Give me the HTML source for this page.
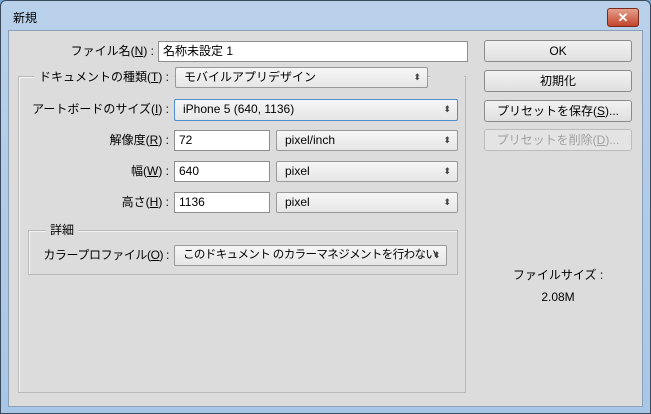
<!DOCTYPE html>
<html><head><meta charset="utf-8"><style>
*{box-sizing:border-box;margin:0;padding:0}
body{width:651px;height:414px;background:#6fa8d6;font-family:"Liberation Sans","Noto Sans CJK JP",sans-serif;font-size:12px;color:#000;position:relative;overflow:hidden}
.frame{position:absolute;left:0;top:0;width:651px;height:414px;background:linear-gradient(#b9d1ea,#a8c6e6);border:1px solid #3a4a5c;border-radius:6px 6px 0 0}
.client{position:absolute;left:8px;top:30px;width:635px;height:377px;background:#dcdcdc;border:1px solid #8aa0b8}
.a{position:absolute}
.lbl{position:absolute;text-align:right;white-space:nowrap;line-height:20px}
.in{position:absolute;background:#fff;border:1px solid #8e8e8e;padding-left:4px;line-height:18px;white-space:nowrap}
.sel{position:absolute;background:linear-gradient(#f6f6f6,#e6e6e6);border:1px solid #999;border-radius:2px;padding-left:8px;line-height:18px;white-space:nowrap}
.sel:after{content:"⬍";position:absolute;right:6px;top:0;font-size:9px;color:#444}
.btn{position:absolute;left:484px;width:148px;height:22px;background:linear-gradient(#f2f2f2,#e0e0e0);border:1px solid #8a8a8a;border-radius:3px;text-align:center;line-height:20px}
.fs{position:absolute;border:1px solid #b9b9b9;box-shadow:1px 1px 0 #f4f4f4 inset}
.leg{position:absolute;background:#dcdcdc;padding:0 4px;line-height:16px}
u{text-decoration:underline}
</style></head><body>
<div class="frame"></div>
<div class="a" style="left:13px;top:9px;font-size:12px">新規</div>
<div class="a" style="left:607px;top:8px;width:32px;height:19px;background:linear-gradient(#e4a08c,#c4442c);border:1px solid #7a2a1c;border-radius:3px;color:#fff;text-align:center;line-height:17px;font-weight:bold;font-size:13px">✕</div>
<div class="client"></div>

<div class="lbl" style="right:497px;top:41px">ファイル名(<u>N</u>) :</div>
<div class="in" style="left:158px;top:41px;width:310px;height:21px">名称未設定 1</div>

<div class="fs" style="left:18px;top:76px;width:448px;height:317px"></div>
<div class="leg" style="left:34px;top:69px;width:140px;height:18px"></div>
<div class="lbl" style="right:482px;top:67px">ドキュメントの種類(<u>T</u>) :</div>
<div class="sel" style="left:175px;top:67px;width:253px;height:21px">モバイルアプリデザイン</div>
<div class="a" style="left:430px;top:70px;width:34px;height:14px;background:#dcdcdc"></div>

<div class="lbl" style="right:482px;top:99px">アートボードのサイズ(<u>I</u>) :</div>
<div class="sel" style="left:174px;top:99px;width:284px;height:22px;border-color:#4f8ed0">iPhone 5 (640, 1136)</div>

<div class="lbl" style="right:482px;top:130px">解像度(<u>R</u>) :</div>
<div class="in" style="left:174px;top:130px;width:96px;height:21px">72</div>
<div class="sel" style="left:276px;top:130px;width:182px;height:21px">pixel/inch</div>

<div class="lbl" style="right:482px;top:161px">幅(<u>W</u>) :</div>
<div class="in" style="left:174px;top:161px;width:96px;height:21px">640</div>
<div class="sel" style="left:276px;top:161px;width:182px;height:21px">pixel</div>

<div class="lbl" style="right:482px;top:192px">高さ(<u>H</u>) :</div>
<div class="in" style="left:174px;top:192px;width:96px;height:21px">1136</div>
<div class="sel" style="left:276px;top:192px;width:182px;height:21px">pixel</div>

<div class="fs" style="left:28px;top:230px;width:430px;height:45px"></div>
<div class="leg" style="left:46px;top:222px">詳細</div>
<div class="lbl" style="right:482px;top:245px;letter-spacing:-0.4px">カラープロファイル(<u>O</u>) :</div>
<div class="sel" style="left:174px;top:245px;width:273px;height:21px;letter-spacing:-0.6px;font-size:11.5px">このドキュメント のカラーマネジメントを行わない</div>

<div class="btn" style="top:40px">OK</div>
<div class="btn" style="top:70px">初期化</div>
<div class="btn" style="top:100px">プリセットを保存(<u>S</u>)...</div>
<div class="btn" style="top:129px;color:#a0a0a0;border-color:#bcbcbc;background:#e4e4e4">プリセットを削除(<u>D</u>)...</div>

<div class="a" style="left:484px;top:266px;width:148px;text-align:center">ファイルサイズ :</div>
<div class="a" style="left:484px;top:290px;width:148px;text-align:center">2.08M</div>
</body></html>
